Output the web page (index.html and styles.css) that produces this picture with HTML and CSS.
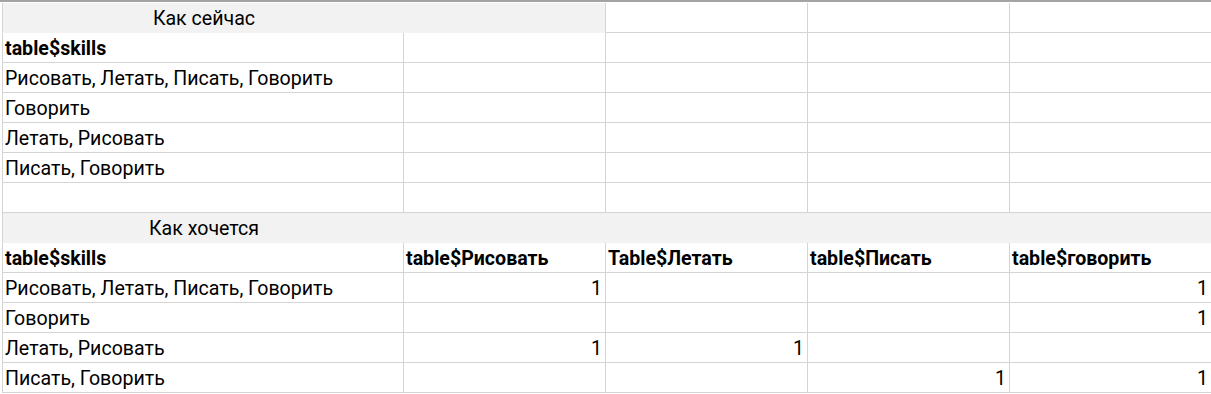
FILE: index.html
```html
<!DOCTYPE html>
<html lang="ru">
<head>
<meta charset="utf-8">
<title>Sheet</title>
<link rel="stylesheet" href="styles.css">
</head>
<body>
<div class="sheet">
  <div class="cell title span2">Как сейчас</div>
  <div class="cell"></div><div class="cell"></div><div class="cell last"></div>

  <div class="cell first bold">table$skills</div><div class="cell"></div><div class="cell"></div><div class="cell"></div><div class="cell last"></div>
  <div class="cell first">Рисовать, Летать, Писать, Говорить</div><div class="cell"></div><div class="cell"></div><div class="cell"></div><div class="cell last"></div>
  <div class="cell first">Говорить</div><div class="cell"></div><div class="cell"></div><div class="cell"></div><div class="cell last"></div>
  <div class="cell first">Летать, Рисовать</div><div class="cell"></div><div class="cell"></div><div class="cell"></div><div class="cell last"></div>
  <div class="cell first">Писать, Говорить</div><div class="cell"></div><div class="cell"></div><div class="cell"></div><div class="cell last"></div>
  <div class="cell first"></div><div class="cell"></div><div class="cell"></div><div class="cell"></div><div class="cell last"></div>

  <div class="cell title span5"><span class="title-text">Как хочется</span></div>

  <div class="cell first bold">table$skills</div><div class="cell bold">table$Рисовать</div><div class="cell bold">Table$Летать</div><div class="cell bold">table$Писать</div><div class="cell bold last">table$говорить</div>
  <div class="cell first">Рисовать, Летать, Писать, Говорить</div><div class="cell num">1</div><div class="cell"></div><div class="cell"></div><div class="cell num last">1</div>
  <div class="cell first">Говорить</div><div class="cell"></div><div class="cell"></div><div class="cell"></div><div class="cell num last">1</div>
  <div class="cell first">Летать, Рисовать</div><div class="cell num">1</div><div class="cell num">1</div><div class="cell"></div><div class="cell last"></div>
  <div class="cell first">Писать, Говорить</div><div class="cell"></div><div class="cell"></div><div class="cell num">1</div><div class="cell num last">1</div>
</div>
</body>
</html>
```

FILE: styles.css
```css
html, body {
  margin: 0;
  padding: 0;
  background: #ffffff;
}

body {
  font-family: Roboto, "Noto Sans", sans-serif;
  font-size: 19.6px;
  color: #000000;
  overflow: hidden;
}

.sheet {
  display: grid;
  grid-template-columns: 402px 202px 202px 202px 202px;
  grid-auto-rows: 30px;
  padding-top: 1px;
  padding-left: 2px;
  border-top: 2px solid #a3a3a3;
  width: 1212px;
}

.cell {
  box-sizing: border-box;
  border-right: 1px solid #d4d4d4;
  border-bottom: 1px solid #d4d4d4;
  display: flex;
  align-items: flex-end;
  padding: 0 3px 1px 2px;
  white-space: nowrap;
  line-height: 24px;
}

.cell.first {
  border-left: 1px solid #d4d4d4;
}

.bold {
  font-weight: 700;
}

.num {
  justify-content: flex-end;
  padding-right: 3px;
}

.title {
  background: #f2f2f2;
  border-bottom-color: #f2f2f2;
  border-left: 1px solid #d4d4d4;
}

.span2 {
  grid-column: span 2;
  justify-content: center;
  padding-right: 202px;
}

.span5 {
  grid-column: span 5;
  border-right-color: #f2f2f2;
}

.title-text {
  width: 398px;
  text-align: center;
}
```
